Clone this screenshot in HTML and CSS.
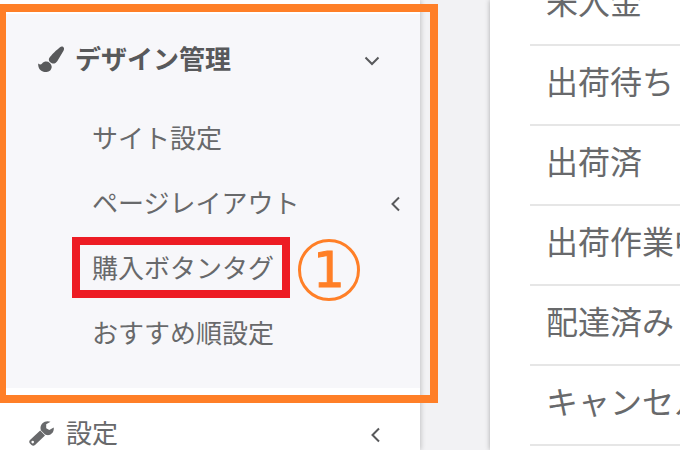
FILE: index.html
```
<!DOCTYPE html>
<html lang="ja">
<head>
    <meta charset="UTF-8">
    <meta name="viewport" content="width=device-width, initial-scale=1.0">
    <title>デザイン管理</title>
    <link rel="stylesheet" href="styles.css">
</head>
<body>
    <div class="page">
        <nav class="sidebar">
            <div class="group open">
                <button class="group-title" type="button" aria-expanded="true">
                    <svg class="icon" viewBox="0 0 26 26">
                        <path d="M25 .8c1.3 1 1.3 2.3.5 4L19.4 15c-1.4 2.2-3.600 3-5.500 2.300-2.500-.9-3.800-3.200-2.600-5.400C12.500 9.800 19.500 3 22 1.200 23 .4 24 .2 25 .8z"/>
                        <path d="M.2 17.500c1.700 1.400 2.700 1.500 3.900 0 2-2.300 5.400-2.600 7.700-.6 2.400 2.200 2.500 5.300.4 7.500-2.500 2.400-7.300 2.100-9.800-.3C.8 22.500 0 20 .2 17.500z"/>
                    </svg>
                    <span class="label">デザイン管理</span>
                    <svg class="chevron" viewBox="0 0 16 16"><path d="M1.500 4.500 8 11l6.500-6.500"/></svg>
                </button>
                <ul class="submenu">
                    <li><a href="#">サイト設定</a></li>
                    <li>
                        <a href="#">ページレイアウト
                            <svg class="chevron" viewBox="0 0 16 16"><path d="M11 1.500 4.500 8l6.500 6.500"/></svg>
                        </a>
                    </li>
                    <li>
                        <a href="#">購入ボタンタグ</a>
                        <span class="mark-box"></span>
                        <span class="mark-number">1</span>
                    </li>
                    <li><a href="#">おすすめ順設定</a></li>
                </ul>
                <div class="frame"></div>
            </div>
            <div class="group">
                <button class="group-title" type="button" aria-expanded="false">
                    <svg class="icon" viewBox="0 0 26 26">
                        <path fill-rule="evenodd" d="M11.200 10.600 16 15.400 6 25c-1 1-2.500 1-3.500 0L1 23.500c-1-1-1-2.500 0-3.500zM3.700 20.800a1.300 1.300 0 1 0 0 2.600 1.300 1.300 0 0 0 0-2.600z"/>
                        <path d="M21.500 1.700 17.200 4.300 17.200 8.200 20.300 10 24.700 7.500C25.500 12.400 21.500 16 17.500 15L16 14.600 12 10.600C9.800 4.800 15.200-.5 21.500 1.700z"/>
                    </svg>
                    <span class="label">設定</span>
                    <svg class="chevron" viewBox="0 0 16 16"><path d="M11 1.500 4.500 8l6.500 6.500"/></svg>
                </button>
            </div>
        </nav>
        <main class="content">
            <div class="card">
                <table class="status">
                    <tbody>
                        <tr><td>未入金</td></tr>
                        <tr><td>出荷待ち</td></tr>
                        <tr><td>出荷済</td></tr>
                        <tr><td>出荷作業中</td></tr>
                        <tr><td>配達済み</td></tr>
                        <tr><td>キャンセル</td></tr>
                    </tbody>
                </table>
            </div>
        </main>
    </div>
</body>
</html>
```
FILE: styles.css
```
* { box-sizing: border-box; }
body {
    margin: 0;
    height: 100vh;
    overflow: hidden;
    background-color: #f2f2f4;
    color: #68696b;
    font-family: 'Noto Sans CJK JP', sans-serif;
    font-size: 26px;
}
.page { display: flex; height: 100%; }
.sidebar {
    flex: 0 0 420px;
    padding-top: 14px;
    background-color: #fff;
    box-shadow: 1px 0 5px rgba(0, 0, 0, 0.2);
}
.group { position: relative; }
.group.open { background-color: #f7f7fa; }
.group-title {
    display: flex;
    align-items: center;
    width: 100%;
    height: 90px;
    padding: 0 36px 0 29px;
    border: none;
    background: none;
    color: inherit;
    font: inherit;
    text-align: left;
    cursor: pointer;
}
.open .group-title {
    padding-left: 38px;
    padding-right: 40px;
    color: #58595b;
    font-weight: bold;
}
.icon { width: 26px; height: 26px; margin-right: 11px; fill: currentColor; }
.label { flex: 1; padding-bottom: 4px; }
.chevron {
    width: 16px;
    height: 16px;
    margin-top: 4px;
    fill: none;
    stroke: #58595b;
    stroke-width: 2;
}
.submenu { list-style: none; margin: 0; padding: 0 0 24px; }
.submenu li { position: relative; }
.submenu a {
    display: flex;
    align-items: center;
    justify-content: space-between;
    height: 65px;
    padding: 0 16px 0 92px;
    color: inherit;
    text-decoration: none;
}

/* callouts */
.frame {
    position: absolute;
    top: -10px;
    right: -18px;
    bottom: -15px;
    left: -2px;
    border: 8px solid #ff7f27;
}
.mark-box {
    position: absolute;
    top: 3px;
    left: 72px;
    width: 218px;
    height: 61px;
    border: 8px solid #ed1c24;
}
.mark-number {
    position: absolute;
    top: 5px;
    left: 298px;
    width: 62px;
    height: 62px;
    border: 3px solid #ff7f27;
    border-radius: 50%;
    color: #ff7f27;
    font-family: 'DejaVu Sans', sans-serif;
    font-size: 50px;
    line-height: 56px;
    text-align: center;
    -webkit-text-stroke: 1px #ff7f27;
}

.content { flex: 1; min-width: 0; padding-left: 70px; }
.card {
    height: 100%;
    padding-left: 40px;
    overflow: hidden;
    background-color: #fff;
    box-shadow: 0 0 5px rgba(0, 0, 0, 0.3);
}
.status { width: 100%; margin-top: -35px; border-collapse: collapse; }
.status td {
    height: 80px;
    padding: 0 16px 10px;
    border-bottom: 2px solid #e6e6e6;
    font-size: 32px;
    line-height: 48px;
    white-space: nowrap;
}
```
